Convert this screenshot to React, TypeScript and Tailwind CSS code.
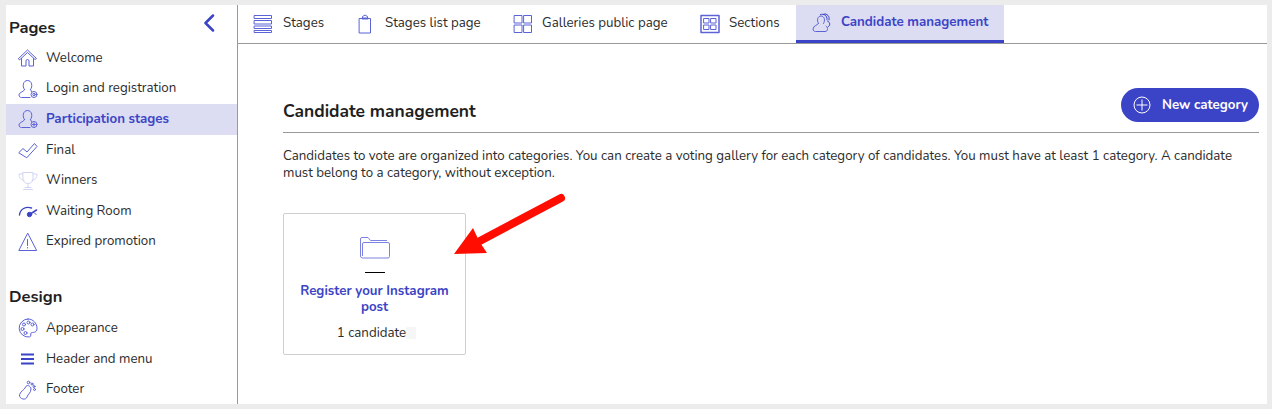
const B = "#3b44c6";
const L = "#5b63d6";
const stroke = { fill: "none", stroke: L, strokeWidth: 1, strokeLinecap: "round" as const, strokeLinejoin: "round" as const };

function I({ children, w = 20, h = 20, className = "" }: { children: React.ReactNode; w?: number; h?: number; className?: string }) {
  return <svg width={w} height={h} viewBox={`0 0 ${w} ${h}`} className={"shrink-0 " + className} {...stroke}>{children}</svg>;
}

const Home = () => <I><path d="M.5 10.500 9.500 2l9 8.500-1.500 1L9.500 4.500 2 11.500zM3.500 10.500V18h4.500v-5a1.500 1.500 0 0 1 3 0v5h4.500v-7.500" /></I>;
const UserBadge = ({ d }: { d: React.ReactNode }) => <I><path d="M6.500 10.500C4 7.500 5 1.500 9.500 1.500S15 7.500 12.500 10.500M6.500 10.500c.5 2-5.500 2.500-5.500 5.500 0 1.500 1 2.500 2.500 2.500H12M12.500 10.500l1 2" /><circle cx="16" cy="15.500" r="3" />{d}</I>;
const Check = () => <I><path d="M1 12.500 5 8.500l4 3.500L16.500 3.500 19 6.500 9 17.500z" /></I>;
const Trophy = () => <I><g stroke="#d3d5f4"><path d="M5 1.500h10v6c0 3.500-2.500 5-5 5s-5-1.500-5-5zM5 3H1c0 3.500 1.500 5.500 5 6.500M15 3h4c0 3.500-1.500 5.500-5 6.500M10 12.500v4M5.500 18.500h9M7 16.500h6" /></g></I>;
const Gauge = () => <I><path d="M1.500 14C2 8 8 5 13.500 7" strokeWidth="1.400" stroke={B} /><circle cx="11.500" cy="13.500" r="2.200" fill={B} stroke={B} /><path d="M11.500 13.500 18.500 9" stroke={B} strokeWidth="1.500" /><path d="M16.500 12l1.500 1.500" stroke={B} /></I>;
const Warn = () => <I><path d="M9.500 1.500.8 18.500h17.500zM9.500 7.500v6M9.500 15.500v.5" /></I>;
const Palette = () => <I><path d="M10 1a9 9 0 1 0 1.500 17.900c2.500-.5.5-2.800 1.500-3.900s6 .5 6-4.500C19 5 15 1 10 1z" /><circle cx="6" cy="6.500" r="1.500" /><circle cx="10.500" cy="4.500" r="1.500" /><circle cx="14.500" cy="6.500" r="1.500" /><circle cx="4.500" cy="11" r="1.500" /><circle cx="7.500" cy="15" r="1.500" /></I>;
const Bars = () => <I><path d="M3 5.500h13M3 10h13M3 14.500h13" stroke={B} strokeWidth="2" strokeLinecap="butt" /></I>;
const Foot = () => <I><path d="M1.500 15.500c0-4 5-5.500 6-8.500 1-2.500 5.500-1.500 5.500 2 0 3.500-3 5-4 8-1 3.500-7.500 2.500-7.500-1.500z" /><circle cx="10.500" cy="2.500" r="1.300" /><circle cx="14" cy="4" r="1" /><circle cx="16" cy="6.500" r="1" /><circle cx="16.500" cy="9.500" r="1" /></I>;

const Stack = () => <I w={20} h={20}><path d="M1.500 1.500h17v3h-17zM1.500 6.500h17v3.500h-17zM1.500 12h17v2.500h-17zM1.500 16.500h17v2h-17z" /></I>;
const Clip = () => <I w={14}><path d="M1.500 4.500h3V2.500L7 1l2.500 1.500v2h3V19h-11z" /><path d="M4.500 4.500h5" strokeWidth="2" /></I>;
const Grid4 = () => <I><path d="M1.500 1.500h7.500v7.500H1.500zM11 1.500h7.500v7.500H11zM1.500 11h7.500v7.500H1.500zM11 11h7.500v7.500H11z" /></I>;
const Sections = () => <I><path d="M1 1.500h18v17H1z" strokeWidth="1.500" /><path d="M4 4.500h5v4.500H4zM11 4.500h5v4.500h-5zM4 11h5v4.500H4zM11 11h5v4.500h-5z" /></I>;
const People = () => <I><path d="M6.500 10.500C4.500 7.500 5.500 3 9 3s4.500 4.500 2.500 7.500M6.500 10.500c0 1.500-5.500 2-5.500 5.500 0 1.500 1 2.500 2.500 2.500h9.500c3 0 3.500-3.500 1-5.500" /><path d="M8.500 1.500c3.500-1 7 1 6.500 5M12 1c3-.5 6 2 5 6M15.500 8c3 1.500 3 4.500.5 6" stroke={B} /></I>;

const pages = [
  { t: "Welcome", i: <Home /> },
  { t: "Login and registration", i: <UserBadge d={<circle cx="16" cy="15.500" r="1.200" />} /> },
  { t: "Participation stages", i: <UserBadge d={<path d="M14.500 15.500h3M16 14v3" />} />, active: true },
  { t: "Final", i: <Check /> },
  { t: "Winners", i: <Trophy /> },
  { t: "Waiting Room", i: <Gauge /> },
  { t: "Expired promotion", i: <Warn /> },
];
const design = [
  { t: "Appearance", i: <Palette /> },
  { t: "Header and menu", i: <Bars /> },
  { t: "Footer", i: <Foot /> },
];
const tabs = [
  { t: "Stages", i: <Stack />, w: "w-[105px] gap-[10px] pl-[15px]" },
  { t: "Stages list page", i: <Clip />, w: "w-[155px] gap-[13px] pl-[15px]" },
  { t: "Galleries public page", i: <Grid4 />, w: "w-[187px] gap-[9px] pl-[15px]" },
  { t: "Sections", i: <Sections />, w: "w-[111px] gap-[9px] pl-[15px]" },
  { t: "Candidate management", i: <People />, w: "w-[208px] gap-[9px] pl-[16px]", active: true },
];

function Row({ t, i, active }: { t: string; i: React.ReactNode; active?: boolean }) {
  return (
    <div className={"flex h-[30.6px] items-center gap-[8px] pl-[12px] text-[13.3px] " + (active ? "bg-[#dcdcf3] font-bold text-[#3b44c6]" : "text-[#2b2b2b]")}>
      {i}
      <span className="whitespace-nowrap pt-[1px]">{t}</span>
    </div>
  );
}

export default function App() {
  return (
    <div className="h-[409px] w-[1272px] overflow-hidden bg-[#ececec] pb-[5px] pl-[6px] pr-[5px] pt-[5px] font-['Nunito','Open_Sans','Noto_Sans',sans-serif]">
      <div className="relative flex h-[399px] bg-white">
        <aside className="w-[232px] shrink-0 border-r border-[#999999]">
          <div className="flex h-[38px] items-center justify-between pl-[3px] pr-[22px] pt-[8px]">
            <h2 className="text-[16.5px] font-bold text-[#1f1f1f]">Pages</h2>
            <svg width="12" height="18" viewBox="0 0 12 18" fill="none" stroke={B} strokeWidth="2.500" strokeLinecap="round" strokeLinejoin="round" className="-translate-y-[5px]"><path d="M10 1.500 2.500 9l7.500 7.500" /></svg>
          </div>
          {pages.map((p) => <Row key={p.t} {...p} />)}
          <h2 className="mt-[27px] h-[29px] pl-[3px] text-[16.5px] font-bold leading-[26px] text-[#1f1f1f]">Design</h2>
          {design.map((p) => <Row key={p.t} {...p} />)}
        </aside>
        <main className="min-w-0 flex-1">
          <nav className="flex h-[39px] border-b border-[#999999]">
            {tabs.map((t) => (
              <div key={t.t} className={"flex h-[38px] items-center text-[13.3px] " + t.w + " " + (t.active ? "border-b-[3px] border-[#3b44c6] bg-[#dcdcf3] font-bold text-[#3b44c6]" : "text-[#2b2b2b]")}>
                {t.i}
                <span className="whitespace-nowrap">{t.t}</span>
              </div>
            ))}
          </nav>
          <section className="pl-[45px] pr-[8px] pt-[44px]">
            <div className="flex h-[45px] items-start justify-between border-b border-[#999999]">
              <h1 className="pt-[10px] text-[17.4px] font-bold leading-[26px] text-[#1f1f1f]">Candidate management</h1>
              <button className="flex h-[34px] w-[138px] items-center gap-[11px] rounded-full bg-[#3b44c6] pl-[12px] text-[13.3px] font-bold text-white">
                <svg width="18" height="18" viewBox="0 0 18 18" fill="none" stroke="white" strokeWidth="1"><circle cx="9" cy="9" r="8" /><path d="M9 3.500v11M3.500 9h11" /></svg>
                <span className="pt-[1px]">New category</span>
              </button>
            </div>
            <p className="mt-[15px] text-[13.3px] leading-[17px] text-[#2b2b2b]">
              Candidates to vote are organized into categories. You can create a voting gallery for each category of candidates. You must have at least 1 category. A candidate must belong to a category, without exception.
            </p>
            <div className="mt-[31px] flex h-[142px] w-[183px] flex-col items-center rounded-[2px] border border-[#cfcfcf] pt-[22px]">
              <svg width="32" height="24" viewBox="0 0 32 24" fill="none" stroke="#7c82e0" strokeWidth="1" strokeLinejoin="round"><path d="M1.500 20V3a1.500 1.500 0 0 1 1.500-1.500h6l2.500 3H28M1.500 20a2 2 0 0 0 2 2H29a1.500 1.500 0 0 0 1.500-1.500V8A1.500 1.500 0 0 0 29 6.500H5A1.500 1.500 0 0 0 3.500 8v12" /></svg>
              <div className="mt-[12px] h-px w-[20px] bg-black" />
              <div className="mt-[10px] w-[165px] text-center text-[13.3px] font-bold leading-[16px] text-[#3b44c6]">Register your Instagram post</div>
              <div className="mt-[9px] flex items-center pl-[4px] text-[13.3px] leading-[18px] text-[#2b2b2b]">
                1 candidate
                <span className="h-[12px] w-[10px] bg-[#f6f6f6]" />
              </div>
            </div>
          </section>
        </main>
        <svg className="absolute left-[447px] top-[186px]" width="116" height="70" viewBox="0 0 116 70" fill="none">
          <path d="M108 7 25 51" stroke="#ff0d00" strokeWidth="8" strokeLinecap="round" />
          <path d="M1 63 20 37 26 50 34 62z" fill="#ff0d00" />
        </svg>
      </div>
    </div>
  );
}
